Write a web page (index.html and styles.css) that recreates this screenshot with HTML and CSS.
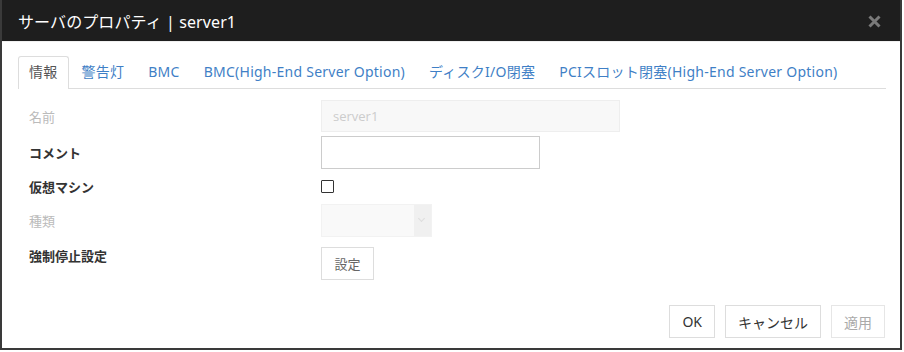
FILE: index.html
```html
<html>
<head>
<title>サーバのプロパティ</title>
<link rel="stylesheet" href="styles.css">
</head>
<body>
<div class="dialog">
<div class="dialog-header">
<h1 class="dialog-title">サーバのプロパティ | server1</h1>
<svg class="close" width="13" height="13" viewBox="0 0 13 13">
<path d="M1.5 1.5 L11.5 11.5 M11.5 1.5 L1.5 11.5" stroke="#7a7a7a" stroke-width="3"/>
</svg>
</div>
<div class="dialog-body">
<ul class="tabs">
<li class="tab active">情報</li>
<li class="tab">警告灯</li>
<li class="tab">BMC</li>
<li class="tab">BMC(High-End Server Option)</li>
<li class="tab">ディスクI/O閉塞</li>
<li class="tab">PCIスロット閉塞(High-End Server Option)</li>
</ul>
<div class="form">
<div class="form-row row-name">
<label class="disabled">名前</label>
<input type="text" class="input input-name" value="server1" disabled>
</div>
<div class="form-row row-comment">
<label>コメント</label>
<input type="text" class="input input-comment">
</div>
<div class="form-row row-vm">
<label>仮想マシン</label>
<span class="checkbox"></span>
</div>
<div class="form-row row-type">
<label class="disabled">種類</label>
<div class="select"><span class="select-arrow"></span></div>
</div>
<div class="form-row row-stop">
<label class="label-top">強制停止設定</label>
<button class="btn btn-small">設定</button>
</div>
</div>
</div>
<div class="dialog-footer">
<button class="btn">OK</button>
<button class="btn">キャンセル</button>
<button class="btn btn-disabled">適用</button>
</div>
</div>
</body>
</html>
```

FILE: styles.css
```css
body {
margin: 0;
background-color: #ffffff;
font-family: "Noto Sans", "Noto Sans CJK JP", sans-serif;
}
.dialog {
width: 898px;
height: 348px;
border: 2px solid #3a3a3a;
border-top: none;
display: flex;
flex-direction: column;
background-color: white;
}
.dialog-header {
height: 41px;
background-color: #1e1e1e;
border-bottom: 1px solid #f0f0f0;
display: flex;
align-items: center;
justify-content: space-between;
padding: 0 19px 0 16px;
}
.dialog-title {
margin: 0;
color: #ffffff;
font-size: 16px;
font-weight: normal;
letter-spacing: 0.1px;
}
.close {
display: block;
margin-top: 1px;
}
.dialog-body {
padding: 14px 14px 0 16px;
flex: 1;
}
.tabs {
list-style: none;
margin: 0;
padding: 0;
display: flex;
border-bottom: 1px solid #dddddd;
height: 32px;
}
.tab {
padding: 0 10px;
margin-right: 2px;
line-height: 30px;
font-size: 14px;
letter-spacing: 0.25px;
color: #3f7fc6;
border: 1px solid transparent;
border-bottom: none;
}
.tab.active {
color: #555;
border-color: #dddddd;
border-radius: 3px 3px 0 0;
background-color: white;
height: 32px;
}
.form {
padding: 11px 0 0 11px;
}
.form-row {
display: grid;
grid-template-columns: 292px 1fr;
align-items: center;
}
.form-row label {
font-size: 13px;
font-weight: bold;
color: #333;
}
.form-row label.disabled {
color: #bbbbbb;
font-weight: normal;
}
.row-name {
height: 32px;
margin-bottom: 4px;
}
.row-comment {
height: 33px;
margin-bottom: 2px;
}
.row-vm {
height: 30px;
margin-bottom: 3px;
}
.row-type {
height: 33px;
margin-bottom: 10px;
}
.row-stop {
height: 33px;
align-items: start;
}
.label-top {
line-height: 18px;
}
.input {
box-sizing: border-box;
height: 100%;
font-family: "Open Sans", "Noto Sans CJK JP", sans-serif;
font-size: 13px;
padding: 0 11px;
}
.input-name {
width: 299px;
height: 32px;
background-color: #f8f8f8;
border: 1px solid #eeeeee;
color: #cccccc;
}
.input-comment {
width: 219px;
height: 33px;
border: 1px solid #cccccc;
}
.checkbox {
width: 11px;
height: 11px;
border: 1px solid #333;
border-radius: 1px;
}
.select {
width: 111px;
height: 33px;
background-color: #f9f9f9;
border: 1px solid #f2f2f2;
box-sizing: border-box;
display: flex;
justify-content: flex-end;
}
.select-arrow {
width: 17px;
background-color: #f0f0f0;
position: relative;
}
.select-arrow::after {
content: "";
position: absolute;
left: 5px;
top: 11px;
width: 4px;
height: 4px;
border-right: 1px solid #dddddd;
border-bottom: 1px solid #dddddd;
transform: rotate(45deg);
}
.btn {
height: 33px;
padding: 0 12px;
background-color: white;
border: 1px solid #dddddd;
font-family: "Noto Sans", "Noto Sans CJK JP", sans-serif;
font-size: 14px;
color: #333;
}
.btn-small {
width: 53px;
padding: 0;
font-size: 13px;
color: #666;
}
.btn-disabled {
color: #aaaaaa;
border-color: #e6e6e6;
}
.dialog-footer {
display: flex;
justify-content: flex-end;
gap: 10px;
padding: 0 15px 10px 0;
}
```
